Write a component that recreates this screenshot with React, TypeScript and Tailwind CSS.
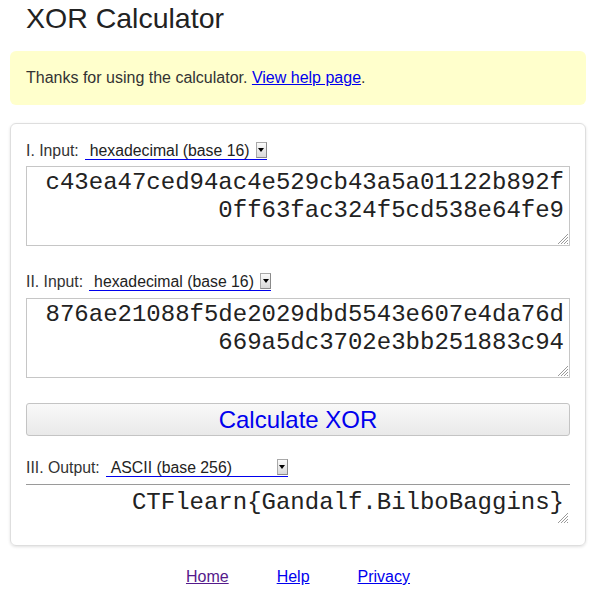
import React from 'react';

const SANS = "font-['Liberation_Sans',Arial,sans-serif]";
const MONO = "font-['Liberation_Mono','Courier_New',monospace]";

// hatched resize grip like the old native one
function Grip() {
  return (
    <svg className="pointer-events-none absolute right-[2px] bottom-[2px]" width="11" height="11" viewBox="0 0 11 11">
      <g stroke="#9a9a9a" strokeWidth="1">
        <line x1="11" y1="1" x2="1" y2="11" />
        <line x1="11" y1="4" x2="4" y2="11" />
        <line x1="11" y1="7" x2="7" y2="11" />
        <line x1="11" y1="10" x2="10" y2="11" />
      </g>
    </svg>
  );
}

// fake native <select> look: text, blue underline, tiny arrow box
function BaseSelect({ label, className }: { label: string; className?: string }) {
  return (
    <div className={`ml-[6px] flex h-[18px] w-[182px] items-end justify-between border-b border-[#0000ee] ${className ?? ''}`}>
      <span className="pl-[5px] text-[15.8px] leading-[17px] text-[#222]">{label}</span>
      <span className="mb-[1px] flex h-[16px] w-[11px] items-center justify-center border border-[#a9a9a9] border-r-[#8a8a8a] border-b-[#8a8a8a] bg-gradient-to-b from-[#fbfbfb] to-[#d9d9d9]">
        <span className="h-0 w-0 border-x-[3px] border-t-[4px] border-x-transparent border-t-black" />
      </span>
    </div>
  );
}

function InputBlock({ label, value, rowClass, taClass }: { label: string; value: string; rowClass: string; taClass: string }) {
  return (
    <>
      <div className={`flex h-[21px] items-end ${rowClass}`}>
        <span className="text-[15.8px] leading-[18px] text-[#333]">{label}</span>
        <BaseSelect label="hexadecimal (base 16)" />
      </div>
      <div className={`relative ${taClass}`}>
        <textarea
          readOnly
          defaultValue={value}
          className={`block h-[80px] w-full resize-none border border-[#c6c6c6] bg-white py-[2px] pl-[2px] pr-[5px] text-right text-[24px] leading-[28px] text-[#222] outline-none ${MONO}`}
        />
        <Grip />
      </div>
    </>
  );
}

export default function App() {
  return (
    <div className={`min-h-[593px] w-full bg-white pl-[10px] pr-[11px] ${SANS}`}>
      <h1 className="pl-[16px] pt-[2px] text-[28.5px] font-normal leading-[33px] text-[#222]">XOR Calculator</h1>

      <div className="mt-[16px] rounded-[6px] bg-[#ffffcc] px-[16px] py-[18px] text-[16px] leading-[18px] text-[#333]">
        Thanks for using the calculator.{' '}
        <a href="#" className="text-[#0000ee] underline">View help page</a>.
      </div>

      <div className="mt-[18px] rounded-[6px] border border-[#dedede] px-[15px] pt-[15px] pb-[20px] shadow-[0_1px_3px_rgba(0,0,0,0.12)]">
        <InputBlock
          label="I. Input:"
          value={'c43ea47ced94ac4e529cb43a5a01122b892f\n0ff63fac324f5cd538e64fe9'}
          rowClass=""
          taClass="mt-[6px]"
        />
        <InputBlock
          label="II. Input:"
          value={'876ae21088f5de2029dbd5543e607e4da76d\n669a5dc3702e3bb251883c94'}
          rowClass="mt-[24px]"
          taClass="mt-[7px]"
        />

        <button className="mt-[25px] block h-[33px] w-full rounded-[3px] border border-[#c4c4c4] bg-gradient-to-b from-[#f9f9f9] to-[#e9e9e9] text-[24px] leading-[28px] text-[#0000ee]">
          Calculate XOR
        </button>

        <div className="mt-[20px] flex h-[21px] items-end">
          <span className="text-[15.8px] leading-[18px] text-[#333]">III. Output:</span>
          <BaseSelect label="ASCII (base 256)" />
        </div>
        <div className="relative mt-[7px]">
          <textarea
            readOnly
            defaultValue="CTFlearn{Gandalf.BilboBaggins}"
            className={`block h-[41px] w-full resize-none border-0 border-t border-[#9a9a9a] bg-white pl-[2px] pr-[6px] pt-[4px] text-right text-[24px] leading-[28px] text-[#222] outline-none ${MONO}`}
          />
          <Grip />
        </div>
      </div>

      <div className="mt-[22px] flex justify-center gap-[48px] pb-[7px] text-[16px] leading-[18px]">
        <a href="#" className="text-[#551a8b] underline">Home</a>
        <a href="#" className="text-[#0000ee] underline">Help</a>
        <a href="#" className="text-[#0000ee] underline">Privacy</a>
      </div>
    </div>
  );
}
